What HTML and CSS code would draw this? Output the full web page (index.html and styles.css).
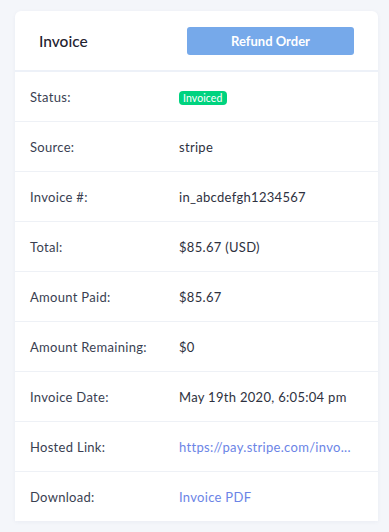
FILE: index.html
```html
<!DOCTYPE html>
<html lang="en">
<head>
    <meta charset="UTF-8">
    <meta name="viewport" content="width=device-width, initial-scale=1.0">
    <title>Invoice</title>
    <link rel="stylesheet" href="styles.css">
</head>
<body>
    <div class="card">
        <div class="card-header">
            <h2>Invoice</h2>
            <button class="refund-btn">Refund Order</button>
        </div>

        <div class="row">
            <div class="label">Status:</div>
            <div class="value"><span class="badge">Invoiced</span></div>
        </div>
        <div class="row">
            <div class="label">Source:</div>
            <div class="value">stripe</div>
        </div>
        <div class="row">
            <div class="label">Invoice #:</div>
            <div class="value">in_abcdefgh1234567</div>
        </div>
        <div class="row">
            <div class="label">Total:</div>
            <div class="value">$85.67 (USD)</div>
        </div>
        <div class="row">
            <div class="label">Amount Paid:</div>
            <div class="value">$85.67</div>
        </div>
        <div class="row">
            <div class="label">Amount Remaining:</div>
            <div class="value">$0</div>
        </div>
        <div class="row">
            <div class="label">Invoice Date:</div>
            <div class="value">May 19th 2020, 6:05:04 pm</div>
        </div>
        <div class="row">
            <div class="label">Hosted Link:</div>
            <div class="value"><a class="link" href="#">https://pay.stripe.com/invo...</a></div>
        </div>
        <div class="row">
            <div class="label">Download:</div>
            <div class="value"><a class="link" href="#">Invoice PDF</a></div>
        </div>
    </div>
</body>
</html>
```

FILE: styles.css
```css
body {
    font-family: 'Lato', sans-serif;
    margin: 0;
    padding: 11px 11px 11px 15px;
    background-color: #f4f6fa;
}

.card {
    width: 363px;
    background-color: #fff;
    border-radius: 6px 6px 0 0;
    box-shadow: 0 1px 4px rgba(40, 60, 120, 0.05);
}

.card-header {
    display: flex;
    align-items: center;
    justify-content: space-between;
    height: 59px;
    padding: 0 24px;
    border-bottom: 2px solid #edf1f8;
}

.card-header h2 {
    margin: 0;
    font-size: 15.5px;
    font-weight: 500;
    color: #1f2330;
}

.refund-btn {
    width: 167px;
    height: 28px;
    font-family: inherit;
    font-size: 13px;
    font-weight: 700;
    color: #fff;
    background-color: #76a9ea;
    border: none;
    border-radius: 3px;
    cursor: pointer;
}

.row {
    display: flex;
    align-items: center;
    height: 49px;
    padding: 0 22px 0 15px;
    border-bottom: 1px solid #eef1f6;
    font-size: 13px;
    letter-spacing: 0.3px;
}

.row:last-child {
    border-bottom: none;
}

.label {
    width: 149px;
    flex-shrink: 0;
    color: #3a3f52;
}

.value {
    flex: 1;
    min-width: 0;
    color: #2e3140;
    white-space: nowrap;
}

.badge {
    display: inline-block;
    padding: 1px 4px;
    font-size: 10.5px;
    line-height: 12px;
    letter-spacing: 0.1px;
    color: #fff;
    background-color: #00d37f;
    border-radius: 4px;
    vertical-align: middle;
}

.link {
    color: #6b84e6;
    text-decoration: none;
}
```
